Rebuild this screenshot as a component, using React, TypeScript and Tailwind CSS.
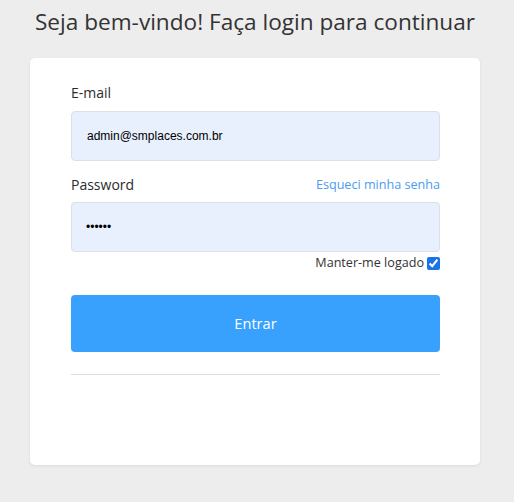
export default function App() {
  return (
    <div className="min-h-[502px] bg-[#ededed] font-['Open_Sans',sans-serif]">
      <div className="w-[510px] pt-[6px]">
        <h1 className="text-center text-[22.6px] leading-[32px] text-[#333]">
          Seja bem-vindo! Faça login para continuar
        </h1>

        <div className="mx-auto mt-[20px] h-[407px] w-[450px] rounded-[5px] bg-white pl-[41px] pr-[40px] pt-[25px] shadow-[0_1px_3px_rgba(0,0,0,0.08)]">
          <label className="block text-[14px] font-medium leading-[20px] text-[#2b2b2b]">E-mail</label>
          <input
            type="text"
            defaultValue="admin@smplaces.com.br"
            className="mt-[8px] block h-[50px] w-full rounded-[4px] border border-[#dcdfe6] bg-[#e8f0fe] px-[15px] font-['Liberation_Sans',Arial,sans-serif] text-[12px] text-black outline-none"
          />

          <div className="mt-[14px] flex items-center justify-between">
            <label className="text-[14px] font-medium leading-[20px] text-[#2b2b2b]">Password</label>
            <a href="#" className="text-[12.6px] text-[#4a9cf0]">
              Esqueci minha senha
            </a>
          </div>
          <input
            type="password"
            defaultValue="123456"
            className="mt-[7px] block h-[50px] w-full rounded-[4px] border border-[#dcdfe6] bg-[#e8f0fe] px-[14px] font-['Liberation_Sans',Arial,sans-serif] text-[12px] text-black outline-none"
          />

          <div className="mt-[1px] flex items-center justify-end gap-[3px]">
            <span className="text-[12.6px] leading-[20px] text-[#333]">Manter-me logado</span>
            <input type="checkbox" defaultChecked className="h-[13px] w-[13px] accent-[#1a73e8]" />
          </div>

          <button className="mt-[22px] flex h-[57px] w-full items-center justify-center rounded-[4px] bg-[#38a1fd] text-[14.6px] text-white">
            Entrar
          </button>

          <div className="mt-[22px] h-px bg-[#ddd]" />
        </div>
      </div>
    </div>
  );
}
